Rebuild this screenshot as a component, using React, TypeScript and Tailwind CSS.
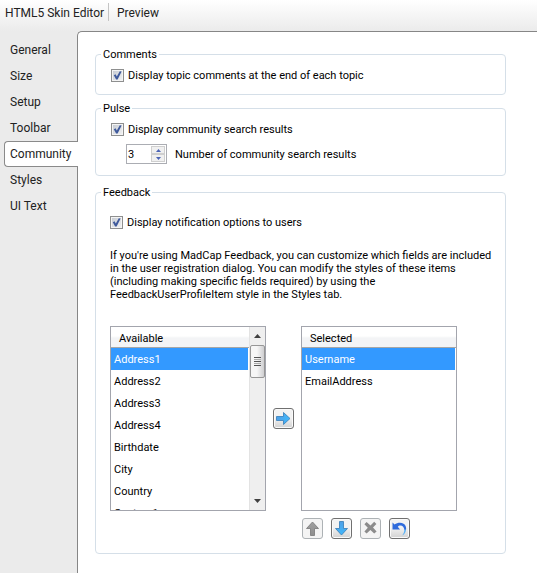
import React, { useState } from "react";

const uiFont = "font-['Roboto','Open_Sans',sans-serif]";
const formFont = "font-['Roboto','Noto_Sans',sans-serif]";

const tabs = ["General", "Size", "Setup", "Toolbar", "Community", "Styles", "UI Text"];

const availableFields = [
  "Address1",
  "Address2",
  "Address3",
  "Address4",
  "Birthdate",
  "City",
  "Country",
  "Custom1",
];

const selectedFields = ["Username", "EmailAddress"];

function CheckField({ label }: { label: string }) {
  const [checked, setChecked] = useState(true);
  return (
    <label className="flex h-[13px] items-center gap-1">
      <span className="relative block size-[13px] shrink-0">
        <input
          type="checkbox"
          checked={checked}
          onChange={(e) => setChecked(e.target.checked)}
          className="block size-[13px] appearance-none border border-[#8e8f8f] bg-linear-to-br from-[#c3c8d0] to-[#f4f4f4] shadow-[inset_0_0_0_1px_#f4f4f4]"
        />
        {checked && (
          <svg className="pointer-events-none absolute inset-0" width="13" height="13" viewBox="0 0 13 13">
            <path d="M2.8 6.2 L4.6 5.2 L5.8 7.6 L8.8 2.2 L10.6 2.6 L6.6 10.5 L5.1 10.5 Z" fill="#3f5a9c" />
          </svg>
        )}
      </span>
      <span className="whitespace-nowrap">{label}</span>
    </label>
  );
}

function Group({ title, className, children }: { title: string; className: string; children: React.ReactNode }) {
  return (
    <fieldset className="min-w-0 rounded-[4px] border border-[#d5dfe8]">
      <legend className="ml-[5px] h-[13px] px-0.5 leading-[13px]">{title}</legend>
      <div className={className}>{children}</div>
    </fieldset>
  );
}

function FieldList({ title, items, scroll }: { title: string; items: string[]; scroll?: boolean }) {
  const [active, setActive] = useState(0);
  return (
    <div className="flex h-[185px] w-[156px] border border-[#a3a5ad] bg-white">
      <div className="flex min-w-0 flex-1 flex-col overflow-hidden">
        <div className="h-[21px] shrink-0 border-b border-[#a6a6a6] bg-linear-to-b from-white from-45% to-[#f3f4f6] to-55% pl-2 pt-px leading-[22px]">
          {title}
        </div>
        <ul role="listbox" aria-label={title} className="min-h-0 flex-1 overflow-hidden">
          {items.map((item, i) => (
            <li
              key={item}
              role="option"
              aria-selected={i === active}
              onClick={() => setActive(i)}
              className={`mr-px h-[22px] pl-[3px] pt-px leading-[22px] ${i === active ? "bg-[#3399ff] text-white" : ""}`}
            >
              {item}
            </li>
          ))}
        </ul>
      </div>
      {scroll && (
        <div className="flex w-4 shrink-0 flex-col border-l border-[#e3e3e3] bg-[#efefef]">
          <button type="button" aria-label="Scroll up" className="flex h-[18px] items-center justify-center">
            <svg width="7" height="4" viewBox="0 0 7 4">
              <path d="M3.5 0 L7 4 H0 Z" fill="#404040" />
            </svg>
          </button>
          <div className="flex h-[33px] flex-col items-center justify-center gap-px rounded-[2px] border border-[#979797] bg-linear-to-r from-[#f6f6f6] from-45% to-[#cfcfd1]">
            <span className="h-px w-[7px] bg-[#555]" />
            <span className="h-px w-[7px] bg-[#aaa]" />
            <span className="h-px w-[7px] bg-[#555]" />
            <span className="h-px w-[7px] bg-[#aaa]" />
            <span className="h-px w-[7px] bg-[#555]" />
          </div>
          <button type="button" aria-label="Scroll down" className="mt-auto flex h-[18px] items-center justify-center">
            <svg width="7" height="4" viewBox="0 0 7 4">
              <path d="M0 0 H7 L3.5 4 Z" fill="#404040" />
            </svg>
          </button>
        </div>
      )}
    </div>
  );
}

function IconButton({ label, disabled, children }: { label: string; disabled?: boolean; children: React.ReactNode }) {
  return (
    <button
      type="button"
      aria-label={label}
      disabled={disabled}
      className={`flex size-[21px] shrink-0 items-center justify-center rounded-[3px] border ${
        disabled
          ? "border-[#adb2b5] bg-[#f4f4f4]"
          : "border-[#707070] bg-linear-to-b from-[#f2f2f2] from-45% to-[#d2d2d2] shadow-[inset_0_0_0_1px_#fafafa]"
      }`}
    >
      {children}
    </button>
  );
}

function Arrow({ turn, muted }: { turn: string; muted?: boolean }) {
  return (
    <svg width="15" height="15" viewBox="0 0 15 15" className={turn}>
      <defs>
        <linearGradient id={muted ? "arrowMuted" : "arrowBlue"} x1="0" y1="0" x2="1" y2="0">
          <stop offset="0" stopColor={muted ? "#8e8e8e" : "#4f9fe6"} />
          <stop offset="1" stopColor={muted ? "#a0a0a0" : "#3fb8fb"} />
        </linearGradient>
      </defs>
      <path
        d="M0.5 5.5 H7.5 V1.5 L14 7.5 L7.5 13.5 V9.5 H0.5 Z"
        fill={muted ? "url(#arrowMuted)" : "url(#arrowBlue)"}
        stroke={muted ? "#808080" : "#3f84bd"}
        strokeWidth="0.9"
      />
    </svg>
  );
}

export default function App() {
  const [tab, setTab] = useState("Community");
  const [count, setCount] = useState(3);

  return (
    <div className="flex min-h-screen flex-col bg-[#ebebeb] text-black">
      <header className={`flex h-[31px] items-start bg-linear-to-b from-white to-[#ebebeb] text-[12px] text-[#222] ${uiFont}`}>
        <h1 className="ml-[5px] w-[103px] whitespace-nowrap leading-[26px]">HTML5 Skin Editor</h1>
        <span className="mt-[3px] h-[18px] w-px bg-[#c4c4c4]" />
        <button type="button" className="ml-2 leading-[26px]">
          Preview
        </button>
      </header>

      <div className="flex flex-1">
        <nav role="tablist" aria-label="Skin sections" className={`z-10 -mr-px flex w-[78px] shrink-0 flex-col pl-1 pt-1.5 text-[12px] text-[#222] ${uiFont}`}>
          {tabs.map((name) => (
            <button
              key={name}
              type="button"
              role="tab"
              aria-selected={name === tab}
              onClick={() => setTab(name)}
              className={`h-[26px] whitespace-nowrap rounded-l-[4px] border border-r-0 pl-[5px] text-left ${
                name === tab ? "border-[#8a8a8a] bg-white" : "border-transparent"
              }`}
            >
              {name}
            </button>
          ))}
        </nav>

        <main className={`min-w-0 flex-1 rounded-tl-[5px] border-l border-t border-[#868686] bg-white pb-[19px] pl-[17px] pr-[31px] pt-4 text-[11px] leading-[13px] ${formFont}`}>
          <Group title="Comments" className="pb-3 pl-[15px] pt-2">
            <CheckField label="Display topic comments at the end of each topic" />
          </Group>

          <div className="mt-[7px]">
            <Group title="Pulse" className="pb-[11px] pl-[15px] pt-2">
              <CheckField label="Display community search results" />
              <div className="ml-[15px] mt-2 flex items-center gap-2">
                <div className="flex h-5 w-[41px] border border-[#abadb3] bg-white">
                  <input
                    id="result-count"
                    type="text"
                    inputMode="numeric"
                    value={count}
                    onChange={(e) => setCount(Number(e.target.value) || 0)}
                    className="w-0 min-w-0 flex-1 pl-px outline-none"
                  />
                  <div className="my-px mr-px flex w-[14px] flex-col">
                    <button type="button" aria-label="Increase" onClick={() => setCount(count + 1)} className="flex h-2 items-center justify-center border border-[#cfcfcf] bg-[#f0f0f0]">
                      <svg width="5" height="3" viewBox="0 0 5 3">
                        <path d="M2.5 0 L5 3 H0 Z" fill="#4a63b5" />
                      </svg>
                    </button>
                    <button type="button" aria-label="Decrease" onClick={() => setCount(count - 1)} className="flex h-2 items-center justify-center border border-[#cfcfcf] bg-[#f0f0f0]">
                      <svg width="5" height="3" viewBox="0 0 5 3">
                        <path d="M0 0 H5 L2.5 3 Z" fill="#4a63b5" />
                      </svg>
                    </button>
                  </div>
                </div>
                <label htmlFor="result-count" className="whitespace-nowrap">
                  Number of community search results
                </label>
              </div>
            </Group>
          </div>

          <div className="mt-[10px]">
            <Group title="Feedback" className="pb-[14px] pl-[14px] pt-[17px]">
              <CheckField label="Display notification options to users" />
              <p className="mt-5 whitespace-nowrap">
                If you're using MadCap Feedback, you can customize which fields are included
                <br />
                in the user registration dialog. You can modify the styles of these items
                <br />
                (including making specific fields required) by using the
                <br />
                FeedbackUserProfileItem style in the Styles tab.
              </p>
              <div className="mt-[25px] flex">
                <FieldList title="Available" items={availableFields} scroll />
                <div className="mx-[7px] mt-[82px]">
                  <IconButton label="Add field">
                    <Arrow turn="" />
                  </IconButton>
                </div>
                <div>
                  <FieldList title="Selected" items={selectedFields} />
                  <div className="ml-px mt-[7px] flex gap-2">
                    <IconButton label="Move up" disabled>
                      <Arrow turn="-rotate-90" muted />
                    </IconButton>
                    <IconButton label="Move down">
                      <Arrow turn="rotate-90" />
                    </IconButton>
                    <IconButton label="Remove" disabled>
                      <svg width="15" height="15" viewBox="0 0 15 15">
                        <path d="M3.6 1 L7.5 4.4 L11.2 0.8 L13.4 3 L10 6.6 L13.6 10.4 L11.2 12.4 L7.4 9 L3.6 12.4 L1.4 10.4 L4.8 6.8 L1.4 3.2 Z" fill="#8c8c8c" />
                      </svg>
                    </IconButton>
                    <IconButton label="Reset">
                      <svg width="15" height="15" viewBox="0 0 15 15">
                        <path d="M0.5 1.5 L2.6 3.6 C6 0.6 12.5 1 13.8 5.4 C14.2 7 14.2 8 14 9 H12.4 C12.2 6.6 10.6 4.6 8.4 4.6 C7.4 4.6 6.4 5 5.8 5.8 L8 8.5 H0.5 Z" fill="#2f6bdc" />
                        <path d="M14.1 8.4 C13.9 10.8 12.6 13.2 10.2 14.4 C11.6 12.6 12.4 10.6 12.3 8.4 Z" fill="#5cb2f5" />
                      </svg>
                    </IconButton>
                  </div>
                </div>
              </div>
            </Group>
          </div>
        </main>
      </div>
    </div>
  );
}
